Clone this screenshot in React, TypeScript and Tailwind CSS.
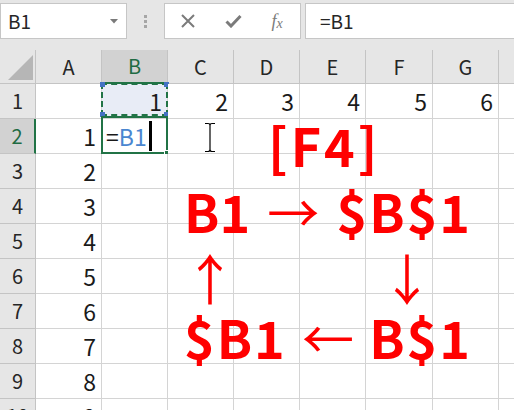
import React from 'react';

const colWidths = ['w-[66px]', 'w-[66px]', 'w-[66px]', 'w-[66px]', 'w-[66px]', 'w-[67px]', 'w-[66px]', 'w-[66px]'];
const colNames = ['A', 'B', 'C', 'D', 'E', 'F', 'G', 'H'];
const rows = [1, 2, 3, 4, 5, 6, 7, 8, 9, 10];

const cellValue = (r: number, c: number) => {
  if (r === 1 && c >= 1 && c <= 6) return String(c);
  if (c === 0 && r >= 2) return String(r - 1);
  return '';
};

const Toolbar: React.FC = () => (
  <div className="h-[50px] bg-[#e6e6e6] flex items-start pt-[3px]">
    {/* Name box */}
    <div className="w-[127px] h-[36px] bg-white border border-[#c6c6c6] flex items-center pl-[7px] pr-[8px]">
      <span className="flex-1 text-[19px] text-[#262626]">B1</span>
      <svg width="8" height="5" viewBox="0 0 8 5">
        <path d="M0 0 L8 0 L4 4.5 Z" fill="#7a7a7a" />
      </svg>
    </div>
    {/* grip dots */}
    <div className="w-[37px] h-[36px] flex flex-col items-center justify-center gap-[2px]">
      <div className="w-[3px] h-[3px] bg-[#a6a6a6]" />
      <div className="w-[3px] h-[3px] bg-[#a6a6a6]" />
      <div className="w-[3px] h-[3px] bg-[#a6a6a6]" />
    </div>
    {/* cancel / enter / fx */}
    <div className="w-[137px] h-[36px] bg-white border border-[#c6c6c6] flex items-center">
      <div className="w-[46px] flex justify-center">
        <svg width="14" height="14" viewBox="0 0 14 14">
          <path d="M1 1 L13 13 M13 1 L1 13" stroke="#7b7b7b" strokeWidth="2" />
        </svg>
      </div>
      <div className="w-[44px] flex justify-center">
        <svg width="17" height="14" viewBox="0 0 17 14">
          <path d="M1.5 7.5 L6 12 L15.5 2" stroke="#7b7b7b" strokeWidth="3" fill="none" />
        </svg>
      </div>
      <div className="w-[44px] flex justify-center text-[18px] italic text-[#7b7b7b] font-['Liberation_Serif',serif]">
        <span>f</span><span className="text-[14px] mt-[5px]">x</span>
      </div>
    </div>
    {/* formula bar */}
    <div className="ml-[4px] flex-1 h-[36px] bg-white border border-[#c6c6c6] border-r-0 flex items-center pl-[14px] text-[19px] text-[#262626]">
      =B1
    </div>
  </div>
);

const HeaderRow: React.FC = () => (
  <div className="h-[34px] flex bg-[#e6e6e6]">
    <div className="w-[36px] shrink-0 h-full border-r border-b border-[#c4c4c4] relative">
      <svg className="absolute left-[8px] top-[5px]" width="25" height="25" viewBox="0 0 25 25">
        <path d="M25 0 L25 25 L0 25 Z" fill="#b6b6b6" />
      </svg>
    </div>
    {colNames.map((n, i) => (
      <div
        key={n}
        className={`${colWidths[i]} shrink-0 h-full flex items-center justify-center text-[20px] border-r ${
          i === 1
            ? 'bg-[#d2d2d2] text-[#1f6b43] border-b-2 border-b-[#217346] border-r-[#c4c4c4]'
            : 'text-[#262626] border-b border-[#c4c4c4]'
        }`}
      >
        {n}
      </div>
    ))}
  </div>
);

const Grid: React.FC = () => (
  <div>
    {rows.map((r) => (
      <div key={r} className="h-[35px] flex">
        <div
          className={`w-[36px] shrink-0 h-full flex items-center justify-center text-[20px] border-b border-[#c4c4c4] ${
            r === 2
              ? 'bg-[#d2d2d2] text-[#1f6b43] border-r-2 border-r-[#217346]'
              : 'bg-[#e6e6e6] text-[#262626] border-r'
          }`}
        >
          {r}
        </div>
        {colNames.map((n, c) => (
          <div
            key={n}
            className={`${colWidths[c]} shrink-0 h-full border-r border-b border-[#d4d4d4] relative flex items-center justify-end pr-[5px] text-[23px] text-[#1a1a1a] ${
              r === 1 && c === 1 ? 'bg-[#e8ecf6]' : 'bg-white'
            }`}
          >
            {cellValue(r, c)}
            {r === 1 && c === 1 && (
              <>
                <div className="absolute -left-[1px] -top-[1px] -right-[1px] bottom-[2px] border-2 border-dashed border-[#217346]" />
                <div className="absolute -left-[2px] -top-[2px] w-[5px] h-[5px] bg-[#4472c4]" />
                <div className="absolute -right-[2px] -top-[2px] w-[5px] h-[5px] bg-[#4472c4]" />
                <div className="absolute -left-[2px] bottom-[1px] w-[5px] h-[5px] bg-[#4472c4]" />
                <div className="absolute -right-[2px] bottom-[1px] w-[5px] h-[5px] bg-[#4472c4]" />
              </>
            )}
            {r === 2 && c === 1 && (
              <>
                <div className="absolute -left-[1px] -top-[3px] -right-[1px] -bottom-[1px] border-2 border-[#217346]" />
                <div className="absolute -right-[3px] -bottom-[3px] w-[6px] h-[6px] bg-[#217346] border border-white" />
                <div className="absolute left-[4px] top-0 bottom-0 flex items-center">
                  <span className="text-[#1a1a1a]">=</span>
                  <span className="text-[#4a86d0]">B1</span>
                  <span className="ml-[2px] w-[3px] h-[30px] bg-black" />
                </div>
              </>
            )}
          </div>
        ))}
      </div>
    ))}
  </div>
);

const IBeam: React.FC = () => (
  <svg className="absolute left-[204px] top-[122px]" width="12" height="31" viewBox="0 0 12 31">
    <path
      d="M1 1.5 H4 Q6 1.5 6 3.5 Q6 1.5 8 1.5 H11 M6 3.5 V27.5 M1 29.5 H4 Q6 29.5 6 27.5 Q6 29.5 8 29.5 H11"
      stroke="#fff"
      strokeWidth="3"
      fill="none"
    />
    <path
      d="M1 1.5 H4 Q6 1.5 6 3.5 Q6 1.5 8 1.5 H11 M6 3.5 V27.5 M1 29.5 H4 Q6 29.5 6 27.5 Q6 29.5 8 29.5 H11"
      stroke="#000"
      strokeWidth="1.2"
      fill="none"
    />
  </svg>
);

const Annotation: React.FC = () => (
  <div className="absolute left-[184px] top-[119px] w-[288px] flex flex-col text-[#ff0000] text-[52px] leading-[52px] font-bold">
    <div className="h-[52px] flex pl-[84px] tracking-[3px]">[F4]</div>
    <div className="h-[52px] mt-[14px] flex justify-between">
      <span>B1</span>
      <span className="font-normal">→</span>
      <span className="tracking-[2px]">$B$1</span>
    </div>
    <div className="h-[74px] flex items-center pt-[6px] font-normal">
      <span className="w-[46px] text-center scale-y-[1.05]">↑</span>
      <span className="ml-[151px] w-[50px] text-center scale-y-[1.05]">↓</span>
    </div>
    <div className="h-[52px] flex justify-between">
      <span className="tracking-[2px]">$B1</span>
      <span className="font-normal">←</span>
      <span className="tracking-[2px]">B$1</span>
    </div>
  </div>
);

export default function App() {
  return (
    <div className="w-[514px] h-[410px] overflow-hidden relative bg-white font-['Noto_Sans_CJK_JP',sans-serif]">
      <Toolbar />
      <HeaderRow />
      <Grid />
      <IBeam />
      <Annotation />
    </div>
  );
}
